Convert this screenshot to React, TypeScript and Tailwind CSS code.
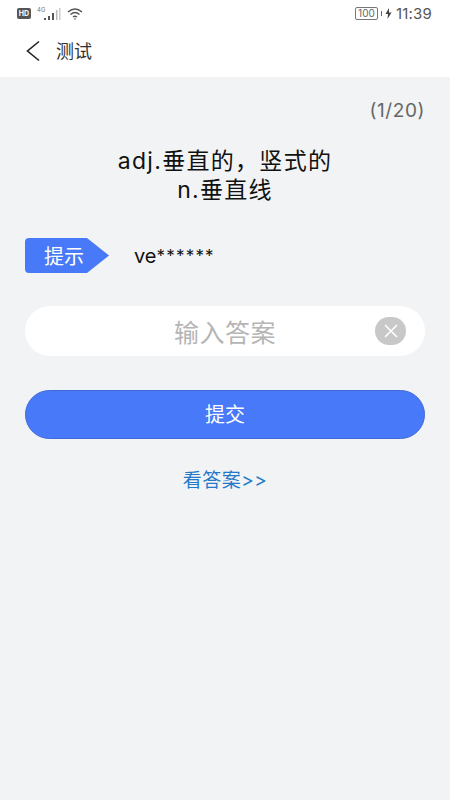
export default function App() {
  const font = "font-['Inter','Noto_Sans_CJK_SC',sans-serif]";
  return (
    <div className={`w-[450px] h-[800px] flex flex-col bg-[#f1f3f5] overflow-hidden ${font}`}>
      <div className="bg-white h-[77px] flex flex-col shrink-0">
        <div className="h-[27px] flex items-center justify-between pl-[17px] pr-[18px]">
          <div className="flex items-center gap-[5px]">
            <div className="w-[14px] h-[11px] rounded-[2px] bg-[#555] text-white text-[7px] font-bold leading-[11px] text-center">HD</div>
            <svg width="25" height="16" viewBox="0 0 25 16" fill="none">
              <text x="1" y="6" fontSize="6" fill="#777">4G</text>
              <rect x="8" y="12" width="2" height="2" fill="#555" />
              <rect x="12" y="10" width="2" height="4" fill="#555" />
              <rect x="16" y="7" width="2" height="7" fill="#555" />
              <rect x="20" y="4" width="1.5" height="10" fill="#bbb" />
              <rect x="23" y="2" width="1.5" height="12" fill="#ccc" />
            </svg>
            <svg width="18" height="14" viewBox="0 0 18 14" fill="none" stroke="#555" strokeWidth="1.4" className="ml-[1px]">
              <path d="M1 5 Q8 -1 15 5" />
              <path d="M3.5 7.5 Q8 3.5 12.5 7.5" />
              <path d="M6 10 Q8 8.5 10 10" />
              <circle cx="8" cy="12" r="0.8" fill="#555" stroke="none" />
            </svg>
          </div>
          <div className="flex items-center gap-[3px] text-[#666]">
            <div className="w-[23px] h-[13px] border border-[#777] rounded-[2px] text-[10px] leading-[11px] text-center">100</div>
            <div className="w-[1px] h-[5px] bg-[#666]" />
            <svg width="7" height="11" viewBox="0 0 7 11"><path d="M4 0 L0.5 6 H3 L2.5 11 L6.5 4.5 H4 Z" fill="#444" /></svg>
            <span className="text-[15px] tracking-[0.2px] leading-none ml-[1px] text-[#555]">11:39</span>
          </div>
        </div>
        <div className="flex items-center flex-1 pl-[25px] pb-[2px]">
          <svg width="16" height="22" viewBox="0 0 16 22" fill="none" stroke="#222" strokeWidth="1.6"><path d="M14 1.5 L2.5 11 L14 20.5" /></svg>
          <span className="ml-[15px] text-[18px] leading-[26px] text-[#333] relative top-[1px]">测试</span>
        </div>
      </div>
      <div className="px-[25px] flex flex-col">
        <div className="text-right text-[19px] text-[#666] mt-[22px] leading-[24px] tracking-[0.6px]">(1/20)</div>
        <div className="text-center text-[23px] tracking-[1.3px] leading-[29px] text-[#111] mt-[24px]">
          <div>adj.垂直的，竖式的</div>
          <div>n.垂直线</div>
        </div>
        <div className="flex items-center mt-[33px] h-[35px]">
          <svg width="84" height="35" viewBox="0 0 84 35" className="shrink-0 w-[84px] h-[35px]">
            <path d="M4 0 H62 L84 17.5 L62 35 H4 Q0 35 0 31 V4 Q0 0 4 0 Z" fill="#4779f8" />
          </svg>
          <span className="-ml-[65px] w-[65px] relative top-[1px] text-white text-[20px]">提示</span>
          <span className="ml-[25px] text-[20px] text-[#111] leading-none">ve<span className="text-[17px] tracking-[1.2px] relative -top-[1px]">******</span></span>
        </div>
        <div className="mt-[33px] h-[50px] bg-white rounded-full flex items-center justify-between pl-[149px] pr-[19px]">
          <span className="text-[25px] leading-[36px] relative top-[2px] text-[#b5b5b5] tracking-[0.5px]">输入答案</span>
          <div className="w-[31px] h-[28px] rounded-full bg-[#c8c8c8] flex items-center justify-center">
            <svg width="14" height="14" viewBox="0 0 14 14" stroke="#fff" strokeWidth="1.6"><path d="M1 1 L13 13 M13 1 L1 13" /></svg>
          </div>
        </div>
        <div className="mt-[34px] h-[49px] rounded-full bg-[#4779f8] border border-[#3f69d6] text-white text-[20px] flex items-center justify-center">提交</div>
        <div className="mt-[29px] text-center text-[#2479c9] text-[19px] tracking-[0.5px] leading-[26px]">看答案&gt;&gt;</div>
      </div>
    </div>
  );
}
